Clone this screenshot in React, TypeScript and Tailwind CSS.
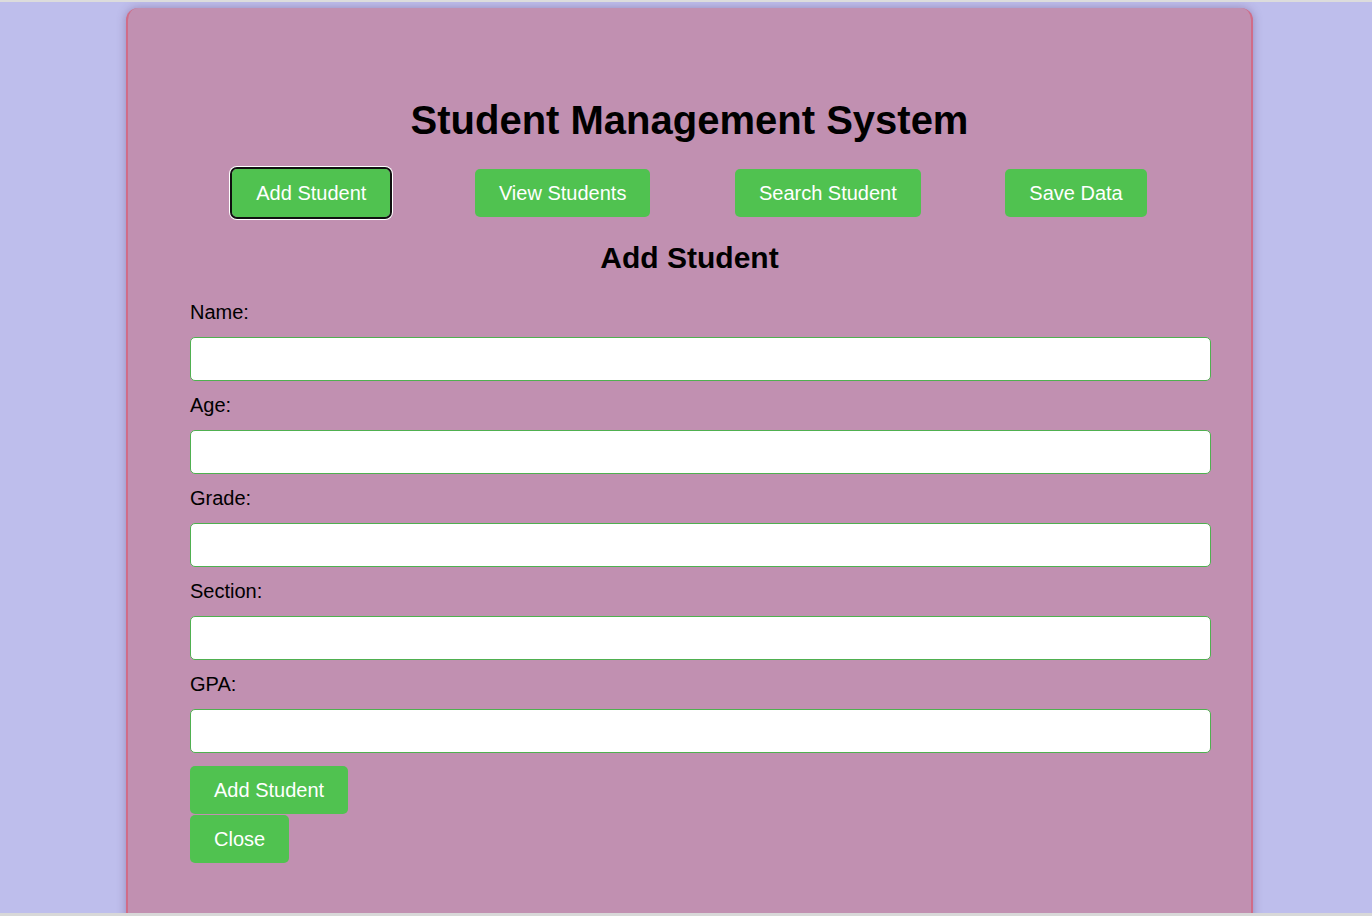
import React from "react";

const font = { fontFamily: '"Liberation Sans", Arial, sans-serif' };

export default function App() {
  const fields = ["Name:", "Age:", "Grade:", "Section:", "GPA:"];
  const btn =
    "bg-[#50c250] text-white text-[20px] leading-[24px] px-6 py-3 rounded-[5px]";
  return (
    <div
      className="w-[1372px] h-[916px] flex flex-col overflow-hidden bg-[#bebeec]"
      style={font}
    >
      <div className="h-[2px] bg-[#dcdcdc] shrink-0" />
      <div className="flex-1 overflow-hidden pt-[6px]">
        <div className="ml-[126px] w-[1127px] h-[1000px] bg-[#c190b1] rounded-t-[12px] border-x-2 border-[#d06c88] shadow-[0_0_10px_rgba(80,40,90,0.35)] px-[62px] pt-[89px]">
          <h1 className="text-[40px] leading-[46px] font-bold text-center text-black">
            Student Management System
          </h1>
          <div className="flex justify-around mt-[26px]">
            <button className={`${btn} outline-2 outline-[#101010] shadow-[0_0_0_3px_white]`}>
              Add Student
            </button>
            <button className={btn}>View Students</button>
            <button className={btn}>Search Student</button>
            <button className={btn}>Save Data</button>
          </div>
          <h2 className="mt-[24px] text-[30px] leading-[34px] font-bold text-center text-black">
            Add Student
          </h2>
          <div className="mt-[26px] flex flex-col">
            {fields.map((f) => (
              <div key={f} className="flex flex-col">
                <label className="text-[20px] leading-[23px] text-black">{f}</label>
                <input
                  className="mt-[13px] mb-[13px] w-[1021px] h-[44px] bg-white border border-[#4fb050] rounded-[5px] px-[10px]"
                  type="text"
                />
              </div>
            ))}
          </div>
          <div className="flex flex-col items-start gap-[1px]">
            <button className={`${btn} leading-[23px]`}>Add Student</button>
            <button className={`${btn} leading-[23px]`}>Close</button>
          </div>
        </div>
      </div>
      <div className="h-[3px] bg-[#d8d8d8] shrink-0" />
    </div>
  );
}
